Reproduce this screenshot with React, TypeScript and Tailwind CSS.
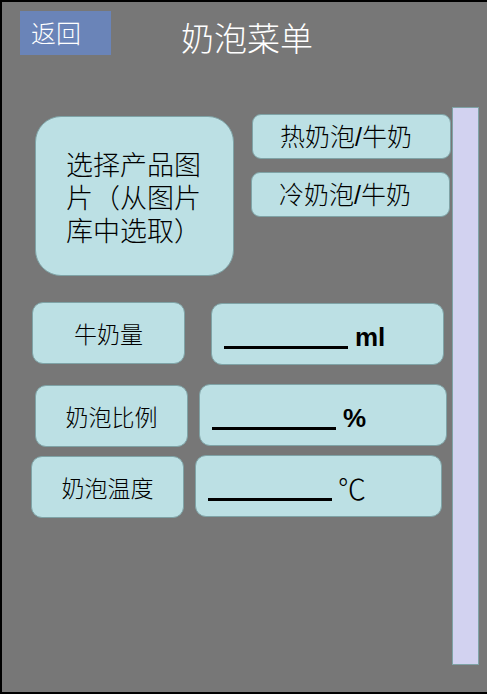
import React from "react";

const cjk = { fontFamily: '"Noto Sans CJK SC", "Noto Sans", sans-serif' };
const arial = { fontFamily: '"Liberation Sans", Arial, sans-serif' };

function Label({ text, className }: { text: string; className: string }) {
  return (
    <div
      className={`w-[153px] h-[62px] rounded-[11px] bg-[#bce0e4] border border-[#7fa3a6] flex items-center justify-center text-[23px] font-light text-black shrink-0 ${className}`}
      style={cjk}
    >
      {text}
    </div>
  );
}

function Input({ unit, className, bold }: { unit: string; className: string; bold?: boolean }) {
  return (
    <div
      className={`h-[62px] rounded-[11px] bg-[#bce0e4] border border-[#7fa3a6] flex items-end pl-[12px] shrink-0 ${className}`}
    >
      <div className="w-[124px] h-[3px] bg-black mb-[15px]" />
      {bold ? (
        <div className="ml-[7px] mb-[14px] text-[26px] leading-[26px] text-black font-bold" style={arial}>
          {unit}
        </div>
      ) : (
        <div className="ml-[6px] mb-[14px] text-[28px] leading-[28px] text-black font-light" style={cjk}>
          {unit}
        </div>
      )}
    </div>
  );
}

function Slash() {
  return <span style={arial}>/</span>;
}

export default function App() {
  return (
    <div className="w-[487px] h-[694px] bg-[#777777] border-l-2 border-t-2 border-b-2 border-black flex flex-col overflow-hidden">
      <div className="flex items-start h-[105px] shrink-0">
        <div
          className="ml-[18px] mt-[9px] w-[91px] h-[44px] bg-[#6a84b8] text-white text-[25px] font-light flex items-center pl-[11px]"
          style={cjk}
        >
          返回
        </div>
        <div className="ml-[70px] mt-[16px] text-[33px] leading-[38px] font-light text-white" style={cjk}>
          奶泡菜单
        </div>
      </div>
      <div className="flex flex-1">
        <div className="w-[450px] flex flex-col shrink-0">
          <div className="flex items-start">
            <div
              className="ml-[33px] mt-[9px] w-[199px] h-[160px] rounded-[26px] bg-[#bce0e4] border border-[#7fa3a6] flex items-center pl-[30px] text-black shrink-0"
              style={cjk}
            >
              <div className="flex flex-col text-[27px] leading-[33px] font-light">
                <span>选择产品图</span>
                <span>片（从图片</span>
                <span>库中选取）</span>
              </div>
            </div>
            <div className="ml-[18px] mt-[7px] flex flex-col">
              <div
                className="w-[199px] h-[45px] rounded-[9px] bg-[#bce0e4] border border-[#7fa3a6] flex items-center pl-[27px] text-[25px] font-light text-black"
                style={cjk}
              >
                <span>
                  热奶泡<Slash />牛奶
                </span>
              </div>
              <div
                className="-ml-[1px] mt-[13px] w-[199px] h-[45px] rounded-[9px] bg-[#bce0e4] border border-[#7fa3a6] flex items-center pl-[27px] text-[25px] font-light text-black"
                style={cjk}
              >
                <span>
                  冷奶泡<Slash />牛奶
                </span>
              </div>
            </div>
          </div>
          <div className="flex items-start mt-[26px]">
            <Label text="牛奶量" className="ml-[30px]" />
            <Input unit="ml" bold className="ml-[26px] mt-[1px] w-[233px]" />
          </div>
          <div className="flex items-start mt-[19px]">
            <Label text="奶泡比例" className="ml-[33px] mt-[1px]" />
            <Input unit="%" bold className="ml-[11px] w-[248px]" />
          </div>
          <div className="flex items-start mt-[8px]">
            <Label text="奶泡温度" className="ml-[29px] mt-[1px]" />
            <Input unit="℃" className="ml-[11px] w-[247px]" />
          </div>
        </div>
        <div className="w-[27px] h-[558px] bg-[#d2d2f0] border border-[#7fa3a6] shrink-0" />
      </div>
    </div>
  );
}
